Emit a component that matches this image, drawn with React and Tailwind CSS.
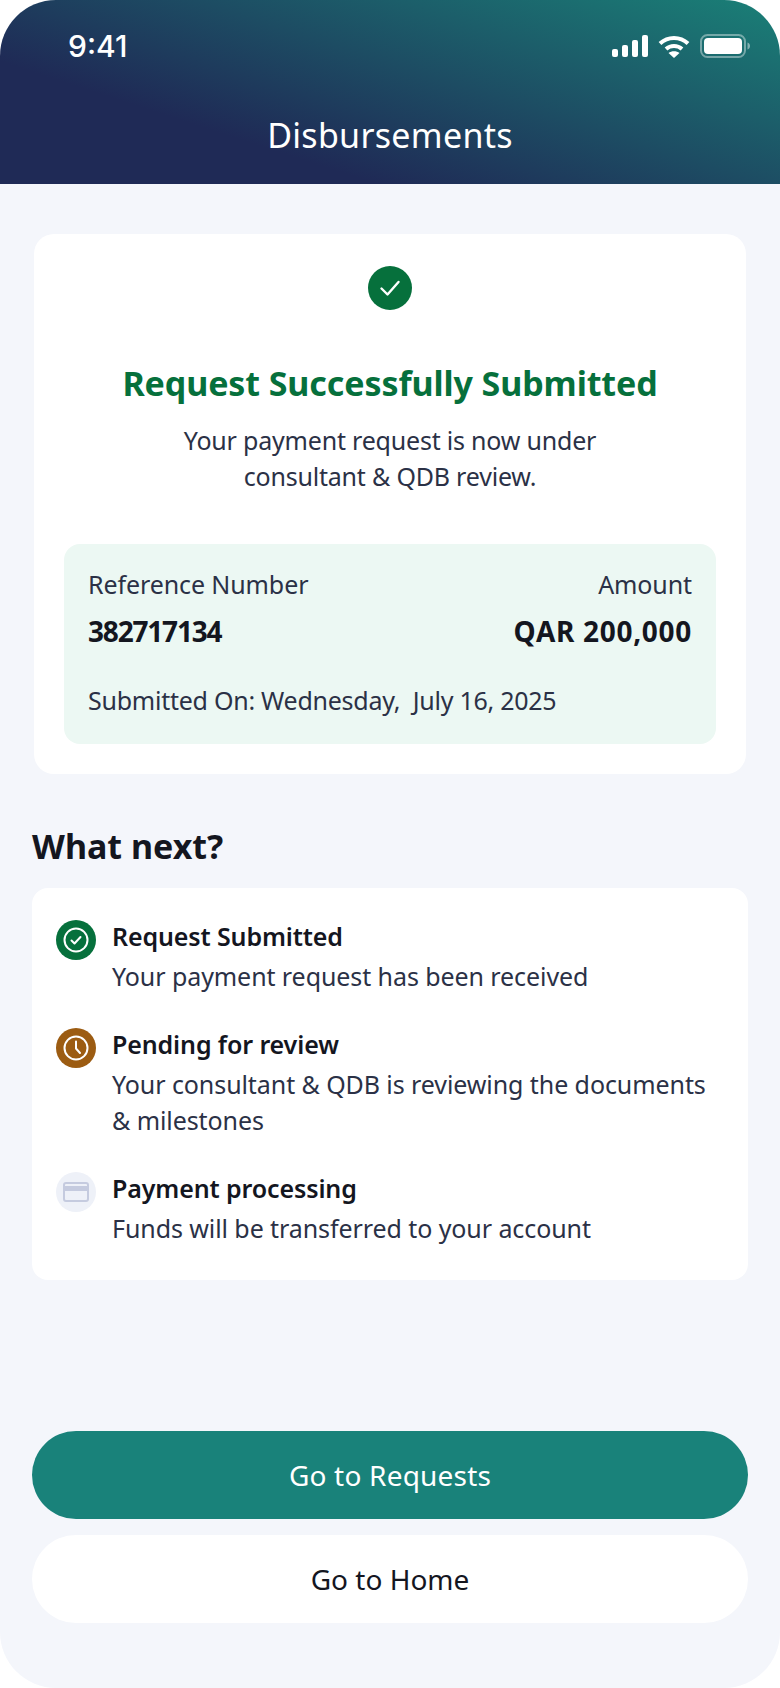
import React from "react";

const F = { fontFamily: '"Noto Sans", sans-serif' };

function Signal() {
  return (
    <svg width="36" height="22" viewBox="0 0 36 22" fill="white">
      <rect x="0" y="14" width="6" height="8" rx="2" />
      <rect x="10" y="10" width="6" height="12" rx="2" />
      <rect x="20" y="5" width="6" height="17" rx="2" />
      <rect x="30" y="0" width="6" height="22" rx="2" />
    </svg>
  );
}
function Wifi() {
  return (
    <svg width="32" height="23" viewBox="0 0 32 23" fill="none" stroke="white">
      <path d="M2 8.5C10 1 22 1 30 8.5" strokeWidth="4" />
      <path d="M8 14C12.5 10 19.5 10 24 14" strokeWidth="4" />
      <path d="M16 23L10.5 18C13.5 15.6 18.5 15.6 21.5 18Z" fill="white" stroke="none" />
    </svg>
  );
}
function Battery() {
  return (
    <svg width="50" height="24" viewBox="0 0 50 24" fill="none">
      <rect x="1" y="1" width="44" height="22" rx="6.5" stroke="white" strokeOpacity="0.4" strokeWidth="2" />
      <rect x="4" y="4" width="38" height="16" rx="4" fill="white" />
      <path d="M47.5 8.5C49 9 50 10.4 50 12C50 13.6 49 15 47.5 15.5Z" fill="white" fillOpacity="0.45" />
    </svg>
  );
}

function Step({ icon, title, children, className = "" }) {
  return (
    <div className={`flex gap-4 ${className}`}>
      <div className="mt-[2px] shrink-0">{icon}</div>
      <div className="flex-1">
        <div className="text-[25px] leading-[36px] font-semibold tracking-[-0.12px] text-[#14161f]">{title}</div>
        <div className="mt-[4px] text-[25px] leading-[36px] tracking-[-0.08px] text-[#2b3146]">{children}</div>
      </div>
    </div>
  );
}

export default function App() {
  return (
    <div className="w-[780px] h-[1688px] bg-white" style={F}>
      <div className="w-full h-full rounded-[56px] overflow-hidden bg-[#f4f6fb] flex flex-col">
        <header className="h-[184px] shrink-0 bg-[linear-gradient(198deg,#1a8077_0%,#1f2a56_72%)] flex flex-col">
          <div className="flex items-center justify-between pl-[68px] pr-[30px] pt-[28px]">
            <span className="text-[30px] leading-[36px] font-medium text-white" style={{ fontFamily: 'Inter, sans-serif' }}>9:41</span>
            <div className="flex items-center gap-[10px]">
              <Signal />
              <Wifi />
              <Battery />
            </div>
          </div>
          <h1 className="text-center text-white text-[34px] leading-[46px] font-normal tracking-[0.3px] mt-[48px]">Disbursements</h1>
        </header>

        <main className="flex-1 flex flex-col px-8">
          <section className="mt-[50px] mx-[2px] bg-white rounded-[20px] h-[540px] px-[30px] pt-[32px] flex flex-col items-center">
            <div className="w-11 h-11 rounded-full bg-[#06703c] flex items-center justify-center">
              <svg width="24" height="24" viewBox="0 0 24 24" fill="none" stroke="white" strokeWidth="2.4" strokeLinecap="round" strokeLinejoin="round">
                <path d="M3.5 12.5L9.5 18.5L20.5 6" />
              </svg>
            </div>
            <h2 className="mt-[49px] text-[34px] leading-[48px] font-bold tracking-[-0.1px] text-[#06703c] text-center">Request Successfully Submitted</h2>
            <p className="mt-[15px] text-[25px] leading-[36px] tracking-[-0.2px] text-[#2b3146] text-center">
              Your payment request is now under
              <br />
              consultant &amp; QDB review.
            </p>
            <div className="mt-[50px] w-full h-[200px] rounded-[16px] bg-[#ecf8f3] px-[24px] pt-[22px]">
              <div className="flex justify-between text-[25px] leading-[36px] tracking-[-0.1px] text-[#2b3146]">
                <span>Reference Number</span>
                <span>Amount</span>
              </div>
              <div className="flex justify-between mt-[11px] text-[28px] leading-[36px] font-bold text-[#14161f]">
                <span className="tracking-[-1.2px]">382717134</span>
                <span className="tracking-[0.7px]">QAR 200,000</span>
              </div>
              <div className="mt-[33px] text-[25px] leading-[36px] tracking-[-0.25px] text-[#2b3146]">Submitted On: Wednesday,&nbsp; July 16, 2025</div>
            </div>
          </section>

          <h3 className="mt-[46px] text-[34px] leading-[52px] font-bold text-[#14161f]">What next?</h3>

          <section className="mt-[16px] bg-white rounded-[16px] h-[392px] px-6 pt-[30px] flex flex-col gap-[32px]">
            <Step
              icon={
                <div className="w-10 h-10 rounded-full bg-[#06703c] flex items-center justify-center">
                  <svg width="28" height="28" viewBox="0 0 28 28" fill="none" stroke="white" strokeLinecap="round" strokeLinejoin="round">
                    <circle cx="14" cy="14" r="11.5" strokeWidth="2" />
                    <path d="M9.5 14.5L12.5 17.5L18.5 11" strokeWidth="2" />
                  </svg>
                </div>
              }
              title="Request Submitted"
            >
              Your payment request has been received
            </Step>
            <Step
              icon={
                <div className="w-10 h-10 rounded-full bg-[#9c5c12] flex items-center justify-center">
                  <svg width="28" height="28" viewBox="0 0 28 28" fill="none" stroke="white" strokeLinecap="round" strokeLinejoin="round">
                    <circle cx="14" cy="14" r="11.5" strokeWidth="2" />
                    <path d="M14 7.5V14.5L18 19" strokeWidth="2" />
                  </svg>
                </div>
              }
              title="Pending for review"
            >
              Your consultant &amp; QDB is reviewing the documents &amp; milestones
            </Step>
            <Step
              icon={
                <div className="w-10 h-10 rounded-full bg-[#eef1f8] flex items-center justify-center">
                  <svg width="26" height="20" viewBox="0 0 26 20" fill="none">
                    <rect x="1" y="1" width="24" height="18" rx="2" stroke="#c5cbdf" strokeWidth="2" />
                    <rect x="1" y="4" width="24" height="5" fill="#c5cbdf" />
                  </svg>
                </div>
              }
              title="Payment processing"
            >
              Funds will be transferred to your account
            </Step>
          </section>

          <div className="mt-auto pb-[65px] flex flex-col gap-4">
            <button className="h-[88px] rounded-full bg-[#19827a] text-white text-[28px] tracking-[0.2px]">Go to Requests</button>
            <button className="h-[88px] rounded-full bg-white text-[#14161f] text-[28px]">Go to Home</button>
          </div>
        </main>
      </div>
    </div>
  );
}
